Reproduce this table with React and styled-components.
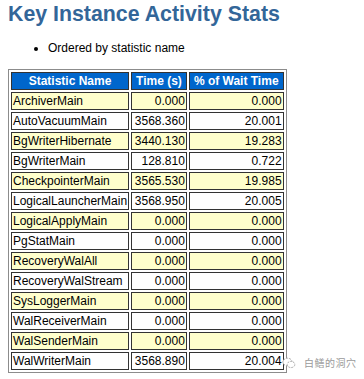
import React from "react";
import styled, { createGlobalStyle } from "styled-components";

const Global = createGlobalStyle`
  html, body { margin: 0; padding: 0; background: #fff; }
  body { font-family: "Liberation Sans", Arial, sans-serif; }
`;

const Page = styled.div`
  position: relative;
  padding: 2px 8px 0 8px;
  width: 364px;
  height: 379px;
  box-sizing: border-box;
  overflow: hidden;
`;

const Title = styled.h2`
  margin: 0;
  font: bold 16pt "Liberation Sans", Arial, sans-serif;
  color: #336699;
`;

const List = styled.ul`
  margin: 14px 0 14px 0;
  padding-left: 40px;
`;

const Item = styled.li`
  font: 12px "Liberation Sans", Arial, sans-serif;
  color: #000;
`;

const Table = styled.table`
  border-collapse: separate;
  border-spacing: 2px;
  border: 1px solid #8c8c8c;
`;

const Th = styled.th`
  font: bold 12px "Liberation Sans", Arial, sans-serif;
  color: #fff;
  background: #0066cc;
  border: 1px solid #333;
  padding: 1px 4px;
  text-align: center;
  white-space: nowrap;
`;

const Td = styled.td`
  font: 12px "Liberation Sans", Arial, sans-serif;
  color: #000;
  background: ${(p) => (p.$alt ? "#ffffcc" : "#ffffff")};
  border: 1px solid #333;
  padding: 1px;
  vertical-align: top;
  text-align: ${(p) => (p.$num ? "right" : "left")};
  white-space: nowrap;
`;

const Watermark = styled.div`
  position: absolute;
  left: 282px;
  top: 355px;
  display: flex;
  align-items: center;
  gap: 8px;
  color: #9a9a9a;
  font: 10px "Noto Sans CJK SC", sans-serif;
  text-shadow: 0 0 2px #fff, 0 0 2px #fff;
  letter-spacing: 0.5px;
`;

const rows = [
  ["ArchiverMain", "0.000", "0.000"],
  ["AutoVacuumMain", "3568.360", "20.001"],
  ["BgWriterHibernate", "3440.130", "19.283"],
  ["BgWriterMain", "128.810", "0.722"],
  ["CheckpointerMain", "3565.530", "19.985"],
  ["LogicalLauncherMain", "3568.950", "20.005"],
  ["LogicalApplyMain", "0.000", "0.000"],
  ["PgStatMain", "0.000", "0.000"],
  ["RecoveryWalAll", "0.000", "0.000"],
  ["RecoveryWalStream", "0.000", "0.000"],
  ["SysLoggerMain", "0.000", "0.000"],
  ["WalReceiverMain", "0.000", "0.000"],
  ["WalSenderMain", "0.000", "0.000"],
  ["WalWriterMain", "3568.890", "20.004"],
];

function WeChatIcon() {
  return (
    <svg width="14" height="12" viewBox="0 0 14 12" fill="none">
      <ellipse cx="5.5" cy="5" rx="4.6" ry="3.8" stroke="#aaa" strokeWidth="1" strokeDasharray="2 1" fill="#fff" />
      <ellipse cx="9" cy="7.5" rx="3.8" ry="3.1" stroke="#aaa" strokeWidth="1" strokeDasharray="2 1" fill="#fff" />
    </svg>
  );
}

export default function App() {
  return (
    <Page>
      <Global />
      <Title>Key Instance Activity Stats</Title>
      <List>
        <Item>Ordered by statistic name</Item>
      </List>
      <Table>
        <thead>
          <tr>
            <Th>Statistic Name</Th>
            <Th>Time (s)</Th>
            <Th>% of Wait Time</Th>
          </tr>
        </thead>
        <tbody>
          {rows.map((r, i) => (
            <tr key={r[0]}>
              <Td $alt={i % 2 === 0}>{r[0]}</Td>
              <Td $alt={i % 2 === 0} $num>{r[1]}</Td>
              <Td $alt={i % 2 === 0} $num>{r[2]}</Td>
            </tr>
          ))}
        </tbody>
      </Table>
      <Watermark>
        <WeChatIcon />
        <span>白鳝的洞穴</span>
      </Watermark>
    </Page>
  );
}
